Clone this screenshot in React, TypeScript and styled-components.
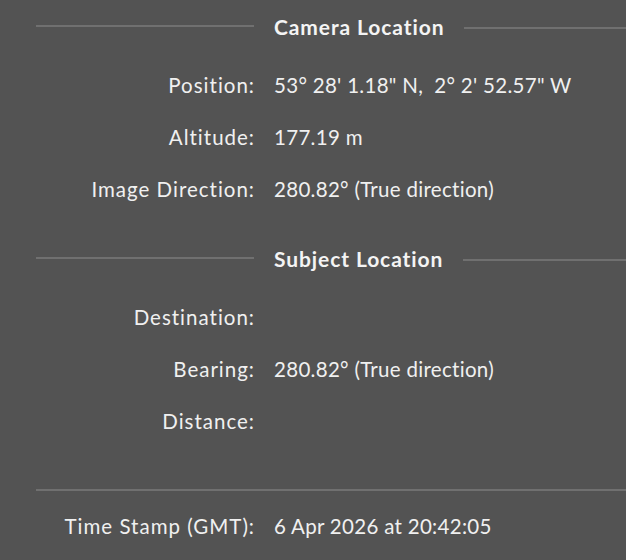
import React from 'react'
import styled, { createGlobalStyle } from 'styled-components'

const GlobalStyle = createGlobalStyle`
  html, body {
    margin: 0;
    padding: 0;
    background: #535353;
  }
  body {
    font-family: Lato, "Open Sans", sans-serif;
    color: #f0f0f0;
    -webkit-font-smoothing: antialiased;
  }
`

const Panel = styled.div`
  width: 626px;
  height: 560px;
  padding-left: 36px;
  box-sizing: border-box;
  overflow: hidden;
`

const Section = styled.section<{ $top?: number }>`
  margin-top: ${({ $top }) => $top ?? 0}px;
`

const SectionHeader = styled.div`
  display: grid;
  grid-template-columns: 218px auto 1fr;
  column-gap: 20px;
  align-items: center;
  height: 52px;
  margin-bottom: 7px;
`

const Rule = styled.div<{ $offset?: number }>`
  height: 2px;
  background: #707070;
  margin-top: ${({ $offset }) => $offset ?? 0}px;
`

const SectionTitle = styled.h2`
  margin: 0;
  font-size: 21px;
  font-weight: 700;
  color: #f4f4f4;
  letter-spacing: 0.9px;
`

const FieldRow = styled.div`
  display: grid;
  grid-template-columns: 218px 1fr;
  column-gap: 20px;
  align-items: center;
  height: 52px;
  font-size: 20.5px;
`

const Label = styled.div`
  text-align: right;
  white-space: nowrap;
  letter-spacing: 1px;
  margin-right: -1px;
`

const Value = styled.div`
  white-space: pre;
  letter-spacing: 0.3px;
`

const Divider = styled.div`
  height: 2px;
  background: #707070;
  margin: 42px 0 9px;
`

type Field = { label: string; value?: string }

const cameraFields: Field[] = [
  { label: 'Position:', value: '53° 28\' 1.18" N,  2° 2\' 52.57" W' },
  { label: 'Altitude:', value: '177.19 m' },
  { label: 'Image Direction:', value: '280.82° (True direction)' },
]

const subjectFields: Field[] = [
  { label: 'Destination:' },
  { label: 'Bearing:', value: '280.82° (True direction)' },
  { label: 'Distance:' },
]

const LocationSection = ({ title, fields, top }: { title: string; fields: Field[]; top?: number }) => (
  <Section $top={top}>
    <SectionHeader>
      <Rule />
      <SectionTitle>{title}</SectionTitle>
      <Rule $offset={3} />
    </SectionHeader>
    {fields.map((f) => (
      <FieldRow key={f.label}>
        <Label>{f.label}</Label>
        <Value>{f.value ?? ''}</Value>
      </FieldRow>
    ))}
  </Section>
)

const App = () => (
  <>
    <GlobalStyle />
    <Panel>
      <LocationSection title="Camera Location" fields={cameraFields} />
      <LocationSection title="Subject Location" fields={subjectFields} top={17} />
      <Divider />
      <FieldRow>
        <Label>Time Stamp (GMT):</Label>
        <Value>6 Apr 2026 at 20:42:05</Value>
      </FieldRow>
    </Panel>
  </>
)

export default App
